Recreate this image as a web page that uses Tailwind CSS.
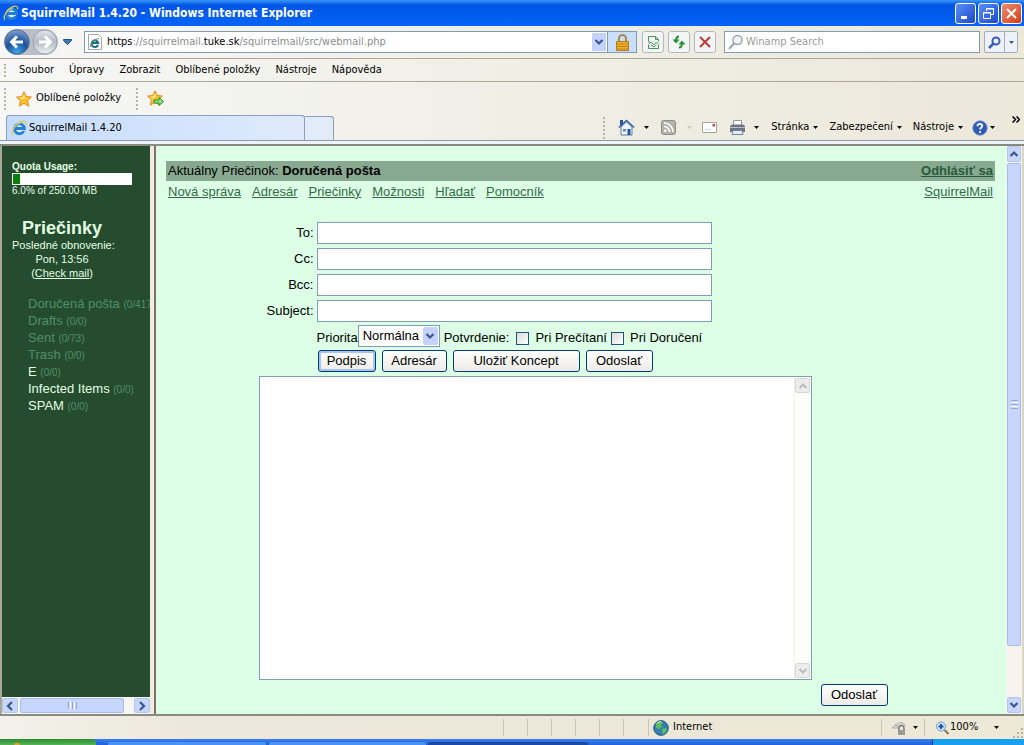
<!DOCTYPE html>
<html lang="sk">
<head>
<meta charset="utf-8">
<title>SquirrelMail 1.4.20</title>
<script src="https://cdn.jsdelivr.net/npm/@tailwindcss/browser@4"></script>
</head>
<body class="flex h-screen flex-col overflow-hidden bg-[#ece9d8] font-['Liberation_Sans',Arial,sans-serif] text-[13px] text-black">

<svg class="hidden" aria-hidden="true">
  <symbol id="ie" viewBox="0 0 16 16">
    <circle cx="8.500" cy="8.500" r="5" fill="#d9efff"/>
    <path d="M12.900 11A4.900 4.900 0 1 1 13.400 8.500H5" fill="none" stroke="#2380d2" stroke-width="2.800"/>
    <path d="M4.300 6.300A5 5 0 0 1 9.500 3.600" fill="none" stroke="#8fd2fb" stroke-width="1.200"/>
    <path d="M2.200 14.800C-.8 12.600 3.500 4.500 10 1.600c3.500-1.400 5.400 0 4.400 2.800" fill="none" stroke="#e5c64c" stroke-width="1.300"/>
  </symbol>
  <symbol id="star" viewBox="0 0 16 16">
    <path d="M8 .8l2.200 4.700 5.200.6-3.900 3.600 1.200 5.400L8 12.400l-4.700 2.700 1.200-5.400L.6 6.100l5.200-.6z" fill="#fdc02b" stroke="#dc8d18" stroke-linejoin="round"/>
    <path d="M8 3l1.200 3.400L6 8.500l-3-1.800 3.400-.4z" fill="#ffe98a"/>
  </symbol>
  <symbol id="down" viewBox="0 0 10 10"><path d="M1.500 3l3.500 3.500L8.500 3" fill="none" stroke="#3b568f" stroke-width="2.200"/></symbol>
  <symbol id="up" viewBox="0 0 10 10"><path d="M1.500 7L5 3.500 8.500 7" fill="none" stroke="#3b568f" stroke-width="2.200"/></symbol>
  <symbol id="left" viewBox="0 0 10 10"><path d="M7 1L3 5l4 4" fill="none" stroke="#3b568f" stroke-width="2.200"/></symbol>
  <symbol id="right" viewBox="0 0 10 10"><path d="M3 1l4 4-4 4" fill="none" stroke="#3b568f" stroke-width="2.200"/></symbol>
  <symbol id="tri" viewBox="0 0 5 3"><path d="M0 0h5L2.500 3z" fill="currentColor"/></symbol>
</svg>

<!-- Title bar -->
<header class="flex h-[26px] shrink-0 items-center bg-linear-to-b from-[#3a94fb] via-[#0055e5] via-20% to-[#0565f8] pl-[3px] pr-[2px] text-white">
  <svg class="mr-[2px] size-4"><use href="#ie"/></svg>
  <h1 class="font-['DejaVu_Sans_Condensed','Noto_Sans',sans-serif] text-[12px] font-bold whitespace-nowrap">SquirrelMail 1.4.20 - Windows Internet Explorer</h1>
  <div class="ml-auto flex gap-[2px]">
    <button aria-label="Minimalizovat" class="flex size-[21px] items-center justify-center rounded-[3px] border border-white bg-linear-to-br from-[#5c8ff5] to-[#1c48c8]"><svg class="size-[15px]" viewBox="0 0 15 15"><path d="M3 10h6v3H3z" fill="#fff"/></svg></button>
    <button aria-label="Obnovit" class="flex size-[21px] items-center justify-center rounded-[3px] border border-white bg-linear-to-br from-[#5c8ff5] to-[#1c48c8]"><svg class="size-[15px]" viewBox="0 0 15 15" fill="none" stroke="#fff"><path d="M5.500 5V2.500h7v6H10M5 3h8M2.500 6.500h7v6h-7zM2 7h8"/></svg></button>
    <button aria-label="Zavřít" class="flex size-[21px] items-center justify-center rounded-[3px] border border-white bg-linear-to-br from-[#f08a6c] to-[#d03c12]"><svg class="size-[15px]" viewBox="0 0 15 15" stroke="#fff" stroke-width="2"><path d="M3 3l9 9M12 3l-9 9"/></svg></button>
  </div>
</header>

<div class="flex min-h-0 flex-1 flex-col">
<div class="shrink-0 bg-linear-to-r from-[#f6f7f6] via-[#f0efe6] via-50% to-[#ece8da] font-['DejaVu_Sans_Condensed','Noto_Sans',sans-serif] text-[11px]">
  <!-- Address row -->
  <div class="flex h-[33px] items-center border-b border-[#aca899] pl-1 pr-[6px]">
    <div class="flex rounded-full bg-[#b9bec8]">
      <button aria-label="Zpět" class="size-[26px]"><svg class="size-full" viewBox="0 0 26 26"><defs><radialGradient id="bk" cx=".5" cy=".9" r=".9"><stop offset="0" stop-color="#3fa8e8"/><stop offset=".5" stop-color="#1a4f9c"/><stop offset="1" stop-color="#7fa3cf"/></radialGradient></defs><circle cx="13" cy="13" r="12.300" fill="url(#bk)" stroke="#53698e"/><path d="M13 7.500L7.500 13l5.500 5.500M8 13h11" fill="none" stroke="#fff" stroke-width="3"/></svg></button>
      <button aria-label="Vpřed" class="ml-[2px] size-[26px]"><svg class="size-full" viewBox="0 0 26 26"><defs><linearGradient id="fw" x2="0" y2="1"><stop offset="0" stop-color="#e4e6ea"/><stop offset=".5" stop-color="#b3bac3"/><stop offset="1" stop-color="#eef2f5"/></linearGradient></defs><circle cx="13" cy="13" r="12" fill="url(#fw)" stroke="#9aa3b0"/><path d="M13 7.500l5.500 5.500-5.500 5.500M18 13H7" fill="none" stroke="#fff" stroke-width="3"/></svg></button>
    </div>
    <button aria-label="Historie" class="ml-[3px] p-[2px]"><svg class="h-[6px] w-[9px]" viewBox="0 0 9 6"><path d="M.5.500h8v1L4.500 5.500l-4-4z" fill="#3a79ba" stroke="#1f4f87"/></svg></button>
    <div class="ml-[10px] flex h-[22px] min-w-0 flex-1 items-center border border-[#7f9db9] bg-white">
      <svg class="ml-[2px] h-4 w-[16px] shrink-0" viewBox="0 0 16 16"><path d="M1.500.500h10l3 3v12h-13z" fill="#fff" stroke="#a8a8a8"/><path d="M11 11a3.300 3.300 0 1 1 .2-2H5.500" fill="none" stroke="#1d6b8c" stroke-width="2"/><path d="M3.500 13C3 10 7 5 12 4.500" fill="none" stroke="#5b9c3b"/></svg>
      <div class="ml-1 flex-1 truncate text-[#8c8c8c]"><span class="text-black">https</span>://squirrelmail.<span class="text-black">tuke.sk</span>/squirrelmail/src/webmail.php</div>
      <button aria-label="Adresy" class="mx-[1px] flex h-[18px] w-[14px] items-center justify-center bg-[#c3d3fb]"><svg class="size-[10px]"><use href="#down"/></svg></button>
      <button aria-label="Zabezpečení" class="flex h-[20px] w-[29px] items-center justify-center border-l border-[#7f9db9] bg-[#c9defa]"><svg class="h-[17px] w-[15px]" viewBox="0 0 15 17"><path d="M4 8V4.500a3.500 3.500 0 0 1 7 0V8" fill="none" stroke="#a88b4c" stroke-width="2"/><path d="M1.500 7.500h12v9h-12z" fill="#eeb02d" stroke="#b87a14"/><path d="M2 10h11M2 12.500h11M2 15h11" stroke="#c48518"/></svg></button>
    </div>
    <button aria-label="Kompatibilní zobrazení" class="ml-[5px] flex h-[22px] w-[22px] items-center justify-center rounded-[3px] border border-[#b3b8c0] bg-[#f4f5f5]"><svg class="size-[15px]" viewBox="0 0 15 15" fill="none" stroke="#48945a"><path d="M2.500 6.500V1.500h7l3 3v2M9.500 1.500v3h3M2.500 10v3.500h10V10M2.500 9.500L5 7l3 3 2.500-3L13 9.500M2.500 7.500L4 6.500M5 10l3 2 2.500-2"/></svg></button>
    <button aria-label="Aktualizovat" class="ml-[4px] flex h-[22px] w-[22px] items-center justify-center rounded-[3px] border border-[#b3b8c0] bg-[#f4f5f5]"><svg class="size-[16px]" viewBox="0 0 16 16"><path d="M8 2.500C5.500 2.500 5 4 5 7M8 13.500C10.500 13.500 11 12 11 9" fill="none" stroke="#259131" stroke-width="2"/><path d="M1.500 5.500h7L5 9.500zM7.500 10.500h7L11 6.500z" fill="#259131"/></svg></button>
    <button aria-label="Zastavit" class="ml-[4px] flex h-[22px] w-[22px] items-center justify-center rounded-[3px] border border-[#b3b8c0] bg-[#f4f5f5]"><svg class="size-[14px]" viewBox="0 0 14 14" stroke="#b93a3a" stroke-width="2"><path d="M2 2l10 10M12 2L2 12"/></svg></button>
    <div class="ml-[8px] flex h-[22px] w-[256px] items-center border border-[#7f9db9] bg-white">
      <svg class="ml-[3px] size-4 shrink-0" viewBox="0 0 16 16" fill="none"><circle cx="9.500" cy="6" r="4.500" fill="#eef6f8" stroke="#9aa5aa" stroke-width="1.500"/><path d="M6 9.500L1 15" stroke="#9aa5aa" stroke-width="2"/></svg>
      <input aria-label="Hledat" placeholder="Winamp Search" class="ml-[2px] min-w-0 flex-1 outline-none placeholder:text-[#9a9a9a]">
    </div>
    <div class="ml-1 flex h-[22px] rounded-[2px] border border-[#9fb0c6] bg-[#eef2f7]">
      <button aria-label="Spustit hledání" class="flex w-[19px] items-center justify-center"><svg class="size-[13px]" viewBox="0 0 13 13" fill="none" stroke="#3b5cb8"><circle cx="8" cy="5" r="3.500" stroke-width="2"/><path d="M5.500 7.500L1 12" stroke-width="2.500"/></svg></button>
      <button aria-label="Možnosti hledání" class="flex w-[13px] items-center justify-center border-l border-[#9fb0c6] text-[#2b5a94]"><svg class="h-[3px] w-[5px]"><use href="#tri"/></svg></button>
    </div>
  </div>

  <!-- Menu bar -->
  <nav class="flex h-[23px] items-center border-b border-[#aca899] pl-1">
    <i class="h-[13px] border-l-2 border-dotted border-[#b9b5a4]"></i>
    <div class="ml-[13px] flex gap-[15px]">
      <button>Soubor</button><button>Úpravy</button><button>Zobrazit</button><button>Oblíbené položky</button><button>Nástroje</button><button>Nápověda</button>
    </div>
  </nav>

  <!-- Favourites bar -->
  <div class="flex h-[33px] items-center pl-1">
    <i class="h-[22px] border-l-2 border-dotted border-[#b9b5a4]"></i>
    <button class="ml-[10px] flex items-center gap-1"><svg class="size-4"><use href="#star"/></svg>Oblíbené položky</button>
    <i class="ml-[15px] h-[22px] border-l-2 border-dotted border-[#b9b5a4]"></i>
    <button aria-label="Přidat k oblíbeným" class="ml-[9px]"><svg class="size-[17px]" viewBox="0 0 17 17"><use href="#star" width="16" height="16"/><path d="M7 10h5V7.500l4.500 4-4.500 4V13H7z" fill="#8fe07a" stroke="#27932c"/></svg></button>
  </div>

  <!-- Tabs and command bar -->
  <div class="flex h-[26px] items-end border-b border-[#8f9aa8] pl-[6px]">
    <button class="flex h-[25px] w-[299px] items-center gap-[2px] rounded-t-[3px] border border-b-0 border-[#8ba0bf] bg-linear-to-r from-[#c4dcfd] to-[#dfeafc] pl-1"><svg class="size-[16px]"><use href="#ie"/></svg>SquirrelMail 1.4.20</button>
    <button aria-label="Nová karta" class="h-[24px] w-[29px] rounded-tr-[3px] border border-b-0 border-l-0 border-[#8ba0bf] bg-[#e2ebf8]"></button>
    <div class="ml-auto flex h-full items-center pr-[4px]">
      <i class="mr-[13px] h-[22px] border-l-2 border-dotted border-[#b9b5a4]"></i>
      <button aria-label="Domů" class="flex items-center gap-[9px]"><svg class="size-[17px]" viewBox="0 0 17 17"><path d="M3 8v8h11V8L8.500 3z" fill="#eef4fd" stroke="#5879ae"/><path d="M.8 8.500L8.500 1.500l7.700 7" fill="none" stroke="#3d5fa0" stroke-width="1.400"/><path d="M2 1h3v3.500L2 7zM9.500 10h3v6h-3z" fill="#2f549a"/><path d="M5 10h3v2.500H5z" fill="#6a86b8"/></svg><svg class="h-[3px] w-[5px]"><use href="#tri"/></svg></button>
      <button aria-label="Informační kanály" class="ml-[12px] flex items-center gap-[11px] text-[#c9c6ba]"><svg class="size-[15px]" viewBox="0 0 15 15" fill="none"><rect x=".5" y=".5" width="14" height="14" rx="2" fill="#b4b2ac" stroke="#8f8d88"/><path d="M3 6.500A5.500 5.500 0 0 1 8.500 12M3 3a9 9 0 0 1 9 9" stroke="#fff" stroke-width="1.500"/><circle cx="4.200" cy="10.800" r="1.300" fill="#fff"/></svg><svg class="h-[3px] w-[5px]"><use href="#tri"/></svg></button>
      <button aria-label="Pošta" class="ml-[10px]"><svg class="block h-[11px] w-[15px]" viewBox="0 0 15 11"><path d="M.5.500h14v10H.5z" fill="#fff" stroke="#a9a4a0"/><path d="M10.500 2h2.500v2.500h-2.500z" fill="#cf4a35"/><path d="M3 7.500h6" stroke="#c9d3e0"/></svg></button>
      <button aria-label="Tisk" class="ml-[12px] flex items-center gap-[8px]"><svg class="size-[17px]" viewBox="0 0 17 17"><path d="M4.500 1.500h8V7h-8z" fill="#fff" stroke="#8d949c"/><path d="M1 7l2-1.500h11L16 7v6H1z" fill="#6e7681"/><path d="M1 8.500h15" stroke="#b9c0c8"/><path d="M4 11.500h9l1 4H3z" fill="#e5eefb" stroke="#6e84a5"/></svg><svg class="h-[3px] w-[5px]"><use href="#tri"/></svg></button>
      <button class="ml-[12px] flex items-center gap-[4px]">Stránka<svg class="h-[3px] w-[5px]"><use href="#tri"/></svg></button>
      <button class="ml-[11px] flex items-center gap-[4px]">Zabezpečení<svg class="h-[3px] w-[5px]"><use href="#tri"/></svg></button>
      <button class="ml-[11px] flex items-center gap-[4px]">Nástroje<svg class="h-[3px] w-[5px]"><use href="#tri"/></svg></button>
      <button aria-label="Nápověda" class="ml-[9px] flex items-center gap-[2px]"><svg class="size-4" viewBox="0 0 16 16" fill="none"><circle cx="8" cy="8" r="7.300" fill="#2d5bb4" stroke="#8fa5cc"/><path d="M5.500 6.300C5.500 3 10.500 3.300 10.300 6c-.1 1.500-2.200 1.600-2.200 3.500M8.100 11v2" stroke="#fff" stroke-width="1.800"/></svg><svg class="h-[3px] w-[5px]"><use href="#tri"/></svg></button>
      <button aria-label="Další" class="mb-[16px] ml-[17px]"><svg class="block h-[7px] w-[8px]" viewBox="0 0 8 7" fill="none" stroke="#000" stroke-width="1.500"><path d="M.5.500l3 3-3 3M4.500.500l3 3-3 3"/></svg></button>
    </div>
  </div>
  <div class="h-[5px] border-b-2 border-[#8a8a80] bg-[#eef3fa]"></div>
</div>

<!-- Page frames -->
<div class="flex min-h-0 flex-1 border-x-2 border-[#d9d4c4] border-l-[#aaa79a]">
  <aside class="flex w-[148px] shrink-0 flex-col overflow-hidden bg-[#264c30] text-[#e2ffe2]">
    <div class="min-h-0 flex-1 overflow-hidden pl-[10px] pt-[15px] text-[11px] leading-[14px]">
      <div class="text-[10px] leading-[12px]">
        <b class="block">Quota Usage:</b>
        <div class="h-3 w-[120px] border border-white bg-white"><div class="h-full bg-[#087f08]" style="width:6%"></div></div>
        <div>6.0% of 250.00 MB</div>
      </div>
      <div class="mt-[21px] w-[100px] text-center">
        <h2 class="text-[18px] leading-[20px] font-bold">Priečinky</h2>
        <p class="whitespace-nowrap">Posledné obnovenie:</p>
        <p>Pon, 13:56</p>
        <p>(<a href="#" class="underline">Check mail</a>)</p>
      </div>
      <ul class="mt-[15px] pl-4 text-[13px] leading-[17px] whitespace-nowrap text-[#4f8f68]">
        <li class="h-[17px]"><a href="#">Doručená pošta</a> <small class="text-[10px]">(0/417)</small></li>
        <li class="h-[17px]"><a href="#">Drafts</a> <small class="text-[10px]">(0/0)</small></li>
        <li class="h-[17px]"><a href="#">Sent</a> <small class="text-[10px]">(0/73)</small></li>
        <li class="h-[17px]"><a href="#">Trash</a> <small class="text-[10px]">(0/0)</small></li>
        <li class="h-[17px]"><a href="#" class="text-[#e2ffe2]">E</a> <small class="text-[10px]">(0/0)</small></li>
        <li class="h-[17px]"><a href="#" class="text-[#e2ffe2]">Infected Items</a> <small class="text-[10px]">(0/0)</small></li>
        <li class="h-[17px]"><a href="#" class="text-[#e2ffe2]">SPAM</a> <small class="text-[10px]">(0/0)</small></li>
      </ul>
    </div>
    <div class="flex h-[17px] shrink-0 items-center bg-[#f7f6f0] py-px">
      <button aria-label="Doľava" class="flex h-[15px] w-[16px] items-center justify-center rounded-[2px] border border-[#b3c6f2] bg-[#c6d6fc]"><svg class="size-[10px]"><use href="#left"/></svg></button>
      <div class="ml-[2px] flex h-[15px] w-[104px] items-center justify-center gap-px rounded-[2px] border border-[#a5bcf3] bg-[#c6d6fc]"><i class="h-[7px] w-px bg-[#8fa8e4]"></i><i class="h-[7px] w-px bg-white"></i><i class="h-[7px] w-px bg-[#8fa8e4]"></i><i class="h-[7px] w-px bg-white"></i><i class="h-[7px] w-px bg-[#8fa8e4]"></i></div>
      <button aria-label="Doprava" class="ml-auto flex h-[15px] w-[16px] items-center justify-center rounded-[2px] border border-[#b3c6f2] bg-[#c6d6fc]"><svg class="size-[10px]"><use href="#right"/></svg></button>
    </div>
  </aside>
  <div class="w-[6px] shrink-0 border-r-2 border-[#7a7468] bg-[#f1ebe0]"></div>

  <main class="min-w-0 flex-1 overflow-hidden bg-[#dcffe6] pl-[10px] pr-[11px] pt-[15px]">
    <div class="flex h-5 items-center justify-between bg-[#88a890] px-[2px]">
      <p>Aktuálny Priečinok: <b>Doručená pošta</b></p>
      <a href="#" class="font-bold text-[#265c38] underline">Odhlásiť sa</a>
    </div>
    <nav class="flex h-[21px] items-center gap-[11px] px-[2px] text-[#336b48]">
      <a href="#" class="underline">Nová správa</a><a href="#" class="underline">Adresár</a><a href="#" class="underline">Priečinky</a><a href="#" class="underline">Možnosti</a><a href="#" class="underline">Hľadať</a><a href="#" class="underline">Pomocník</a>
      <a href="#" class="ml-auto underline">SquirrelMail</a>
    </nav>

    <form class="mx-auto mt-[20px] w-[644px]">
      <div class="grid grid-cols-[55px_395px] items-center gap-x-[3px] gap-y-1 text-right">
        <label for="to">To:</label><input id="to" class="h-[22px] border border-[#7f9db9] bg-white px-1">
        <label for="cc">Cc:</label><input id="cc" class="h-[22px] border border-[#7f9db9] bg-white px-1">
        <label for="bcc">Bcc:</label><input id="bcc" class="h-[22px] border border-[#7f9db9] bg-white px-1">
        <label for="subject">Subject:</label><input id="subject" class="h-[22px] border border-[#7f9db9] bg-white px-1">
      </div>
      <div class="mt-[3px] flex h-[22px] items-center pl-[58px]">
        <label for="prio" class="pt-1">Priorita</label>
        <div class="relative">
          <select id="prio" class="block h-[22px] w-[82px] appearance-none border border-[#7f9db9] bg-white pl-1"><option>Normálna</option></select>
          <span class="pointer-events-none absolute top-[2px] right-[2px] flex h-[18px] w-[15px] items-center justify-center rounded-[2px] bg-[#c3d3fb]"><svg class="size-[10px]"><use href="#down"/></svg></span>
        </div>
        <span class="ml-[4px] pt-1">Potvrdenie:</span>
        <label class="ml-[7px] flex items-center gap-[6px] pt-1"><input type="checkbox" class="size-[13px] appearance-none border border-[#1d5281] bg-linear-to-br from-[#dcdcd7] to-white">Pri Prečítaní</label>
        <label class="ml-[4px] flex items-center gap-[6px] pt-1"><input type="checkbox" class="size-[13px] appearance-none border border-[#1d5281] bg-linear-to-br from-[#dcdcd7] to-white">Pri Doručení</label>
      </div>
      <div class="mt-[3px] flex gap-[6px] pl-[59px]">
        <button type="button" class="h-[22px] w-[58px] rounded-[3px] border border-[#003c74] bg-linear-to-b from-white to-[#ecebe6] inset-ring-2 inset-ring-[#a9c4f1]">Podpis</button>
        <button type="button" class="h-[22px] w-[65px] rounded-[3px] border border-[#003c74] bg-linear-to-b from-white to-[#ecebe6]">Adresár</button>
        <button type="button" class="h-[22px] w-[127px] rounded-[3px] border border-[#003c74] bg-linear-to-b from-white to-[#ecebe6]">Uložiť Koncept</button>
        <button type="button" class="h-[22px] w-[67px] rounded-[3px] border border-[#003c74] bg-linear-to-b from-white to-[#ecebe6]">Odoslať</button>
      </div>
      <div class="mt-1 flex h-[304px] w-[553px] border border-[#7f9db9] bg-white">
        <textarea aria-label="Text správy" class="flex-1 resize-none p-1 outline-none"></textarea>
        <div class="flex w-[17px] flex-col items-center justify-between border-l border-[#f0efe8] bg-[#fdfdfb] py-px">
          <span class="flex size-[15px] items-center justify-center rounded-[2px] border border-[#d9d7cd] bg-[#efede5] grayscale"><svg class="size-[10px] opacity-30"><use href="#up"/></svg></span>
          <span class="flex size-[15px] items-center justify-center rounded-[2px] border border-[#d9d7cd] bg-[#efede5] grayscale"><svg class="size-[10px] opacity-30"><use href="#down"/></svg></span>
        </div>
      </div>
      <div class="mt-1 flex justify-end pr-[15px]">
        <button class="h-[22px] w-[67px] rounded-[3px] border border-[#003c74] bg-linear-to-b from-white to-[#ecebe6]">Odoslať</button>
      </div>
    </form>
  </main>

  <div class="flex w-4 shrink-0 flex-col bg-[#f5f3ec] px-px">
    <button aria-label="Hore" class="flex h-[16px] shrink-0 items-center justify-center rounded-[2px] border border-[#b3c6f2] bg-[#c6d6fc]"><svg class="size-[10px]"><use href="#up"/></svg></button>
    <div class="mt-px flex h-[85%] flex-col items-center justify-center gap-px rounded-[2px] border border-[#a5bcf3] bg-[#c6d6fc]"><i class="h-px w-[7px] bg-[#8fa8e4]"></i><i class="h-px w-[7px] bg-white"></i><i class="h-px w-[7px] bg-[#8fa8e4]"></i><i class="h-px w-[7px] bg-white"></i><i class="h-px w-[7px] bg-[#8fa8e4]"></i></div>
    <button aria-label="Dole" class="mt-auto mb-[1px] flex h-[16px] shrink-0 items-center justify-center rounded-[2px] border border-[#b3c6f2] bg-[#c6d6fc]"><svg class="size-[10px]"><use href="#down"/></svg></button>
  </div>
</div>
</div>

<!-- Status bar -->
<footer class="flex h-[25px] shrink-0 items-center border-t-2 border-[#8a8a80] bg-linear-to-r from-[#f2f2ea] via-[#ece7da] via-20% to-[#ece9d8] font-['DejaVu_Sans_Condensed','Noto_Sans',sans-serif] text-[11px]">
  <div class="ml-auto flex h-[17px] divide-x divide-[#c9c5b4] border-x border-[#c9c5b4]"><i class="w-6"></i><i class="w-6"></i><i class="w-6"></i><i class="w-6"></i><i class="w-6"></i><i class="w-6"></i></div>
  <div class="flex w-[232px] items-center gap-1 pl-[4px]"><svg class="size-4" viewBox="0 0 16 16"><circle cx="8" cy="8" r="7.400" fill="#2f7fb8" stroke="#41617c"/><path d="M3 4c2-3 6-3 7-1L8 5l1 2-3 2-3-1zM9 9l4-1 1 2-3 4-2-1z" fill="#62bb5b"/><path d="M4 3.500q2-2 4-2" fill="none" stroke="#d5f1ff"/></svg>Internet</div>
  <button aria-label="Chránený režim" class="flex h-[17px] w-[43px] items-center gap-[6px] border-l border-[#c9c5b4] pl-[9px]"><svg class="size-4 shrink-0" viewBox="0 0 16 16" fill="none"><path d="M1 8l4-4 2 4zM5 6c2-5 8-4 9 0" fill="#d9d9d6" stroke="#aaa"/><path d="M8 10V8a2.500 2.500 0 0 1 5 0v2" stroke="#777" stroke-width="1.500"/><path d="M7 10h7v5H7z" fill="#999"/></svg><svg class="h-[3px] w-[5px] shrink-0"><use href="#tri"/></svg></button>
  <button class="flex h-[17px] w-[102px] items-center border-l border-[#c9c5b4] pl-[10px]"><svg class="mr-[1px] size-[14px]" viewBox="0 0 14 14" fill="none"><circle cx="6" cy="5.500" r="4.500" fill="#cfe6fb" stroke="#6b9dcc"/><path d="M9.500 9l4 4" stroke="#8a7657" stroke-width="2"/><path d="M6 3v5M3.500 5.500h5" stroke="#1b4ea8" stroke-width="1.800"/></svg>100%<svg class="mr-[27px] ml-auto h-[3px] w-[5px] shrink-0"><use href="#tri"/></svg></button>
  <svg class="-ml-[14px] size-[12px] self-end" viewBox="0 0 12 12" fill="#b8b4a2"><path d="M9 1h2v2H9zM9 5h2v2H9zM9 9h2v2H9zM5 5h2v2H5zM5 9h2v2H5zM1 9h2v2H1z"/></svg>
</footer>

<!-- Taskbar edge -->
<div class="flex h-[6px] shrink-0 bg-linear-to-b from-[#3a80f0] to-[#245edb]">
  <div class="flex w-[96px] justify-start rounded-tr-[4px] bg-linear-to-b from-[#2f8a32] to-[#55b556] pl-[14px]"><i class="mt-[4px] h-[2px] w-[6px] rounded-t-full bg-[#e8a030]"></i></div>
  <div class="mt-[3px] ml-[12px] w-[158px] rounded-t-[2px] bg-[#4a92fb]"></div>
  <div class="mt-[3px] ml-[3px] w-[157px] rounded-t-[2px] bg-[#4a92fb]"></div>
  <div class="mt-[3px] ml-[2px] w-[160px] rounded-t-[2px] bg-[#1c48a8]"></div>
  <div class="ml-auto w-[92px] border-l border-[#093c8c] bg-[#17a0ee]"></div>
</div>
</body>
</html>
